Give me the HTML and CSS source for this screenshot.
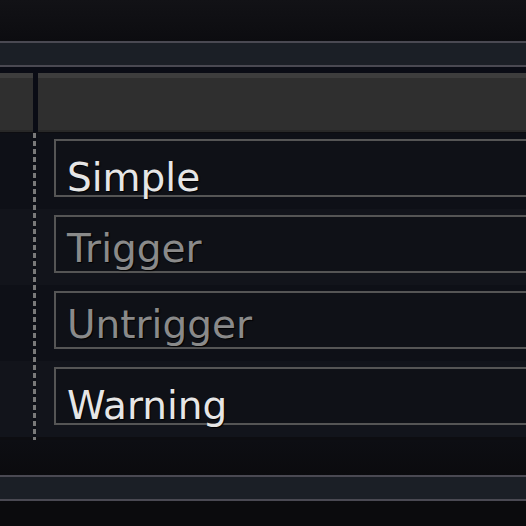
FILE: index.html
```html
<!DOCTYPE html>
<html lang="en">
<head>
    <meta charset="UTF-8">
    <meta name="viewport" content="width=device-width, initial-scale=1.0">
    <title>Notification Types</title>
    <link rel="stylesheet" href="styles.css">
</head>
<body>
    <div class="panel">
        <div class="top"></div>
        <div class="bar"></div>
        <div class="spacer"></div>

        <div class="header">
            <div class="head-cell head-lead"></div>
            <div class="head-cell head-main"></div>
        </div>

        <div class="list">
            <div class="lead-col">
                <div class="stripe"></div>
                <div class="stripe"></div>
                <div class="stripe"></div>
                <div class="stripe"></div>
            </div>
            <div class="rule"></div>
            <div class="items">
                <div class="row"><div class="field active">Simple</div></div>
                <div class="row"><div class="field">Trigger</div></div>
                <div class="row"><div class="field">Untrigger</div></div>
                <div class="row"><div class="field active">Warning</div></div>
            </div>
        </div>

        <div class="bottom-gap"></div>
        <div class="bar"></div>
        <div class="foot"></div>
    </div>
</body>
</html>
```

FILE: styles.css
```css
:root {
    --bg-dark: #0d0d11;
    --bar-color: #1b1f26;
    --bar-line: #4a4952;
    --header-gray: #2f2f2f;
    --divider: #0a0c15;
    --row-odd: #0e1017;
    --row-even: #12141b;
    --box-line: #555555;
    --text-bright: #e6e6e6;
    --text-dim: #8a8a8a;
}

html, body {
    margin: 0;
    padding: 0;
}

body {
    width: 526px;
    height: 526px;
    overflow: hidden;
    background-color: var(--bg-dark);
    font-family: "DejaVu Sans", sans-serif;
}

.panel {
    display: flex;
    flex-direction: column;
    height: 526px;
}

.top {
    height: 41px;
    background: linear-gradient(#121216, #0c0c10);
}

.bar {
    height: 22px;
    background-color: var(--bar-color);
    border-top: 2px solid var(--bar-line);
    border-bottom: 2px solid var(--bar-line);
}

.spacer {
    height: 6px;
    background-color: var(--divider);
}

.header {
    display: flex;
    gap: 5px;
    height: 59px;
    background-color: var(--divider);
}

.head-cell {
    background-color: var(--header-gray);
    border-top: 5px solid #3d3d3d;
    border-bottom: 2px solid #282828;
}

.head-lead {
    width: 33px;
}

.head-main {
    flex: 1;
}

.list {
    display: flex;
    height: 307px;
    padding-top: 1px;
}

.lead-col {
    width: 33px;
    display: flex;
    flex-direction: column;
}

.stripe,
.row {
    height: 76px;
}

.stripe:nth-child(odd),
.row:nth-child(odd) {
    background-color: var(--row-odd);
}

.stripe:nth-child(even),
.row:nth-child(even) {
    background-color: var(--row-even);
}

.rule {
    width: 3px;
    background-color: var(--row-odd);
    background-image: repeating-linear-gradient(to bottom, #7a7a7a 0 5px, transparent 5px 8px);
}

.items {
    flex: 1;
    display: flex;
    flex-direction: column;
}

.row {
    padding: 6px 0 0 18px;
    box-sizing: border-box;
}

.field {
    height: 54px;
    border: 2px solid var(--box-line);
    border-right: none;
    background-color: #0f1117;
    color: var(--text-dim);
    font-size: 39px;
    line-height: 63px;
    padding-left: 11px;
    white-space: nowrap;
    overflow: visible;
    text-shadow: 1px 1px 1px #000;
}

.field.active {
    color: var(--text-bright);
    line-height: 73px;
}

.bottom-gap {
    height: 35px;
    background: linear-gradient(#0d0e13, #0b0b0e);
}

.foot {
    flex: 1;
    background-color: #0b0b0d;
}
```
